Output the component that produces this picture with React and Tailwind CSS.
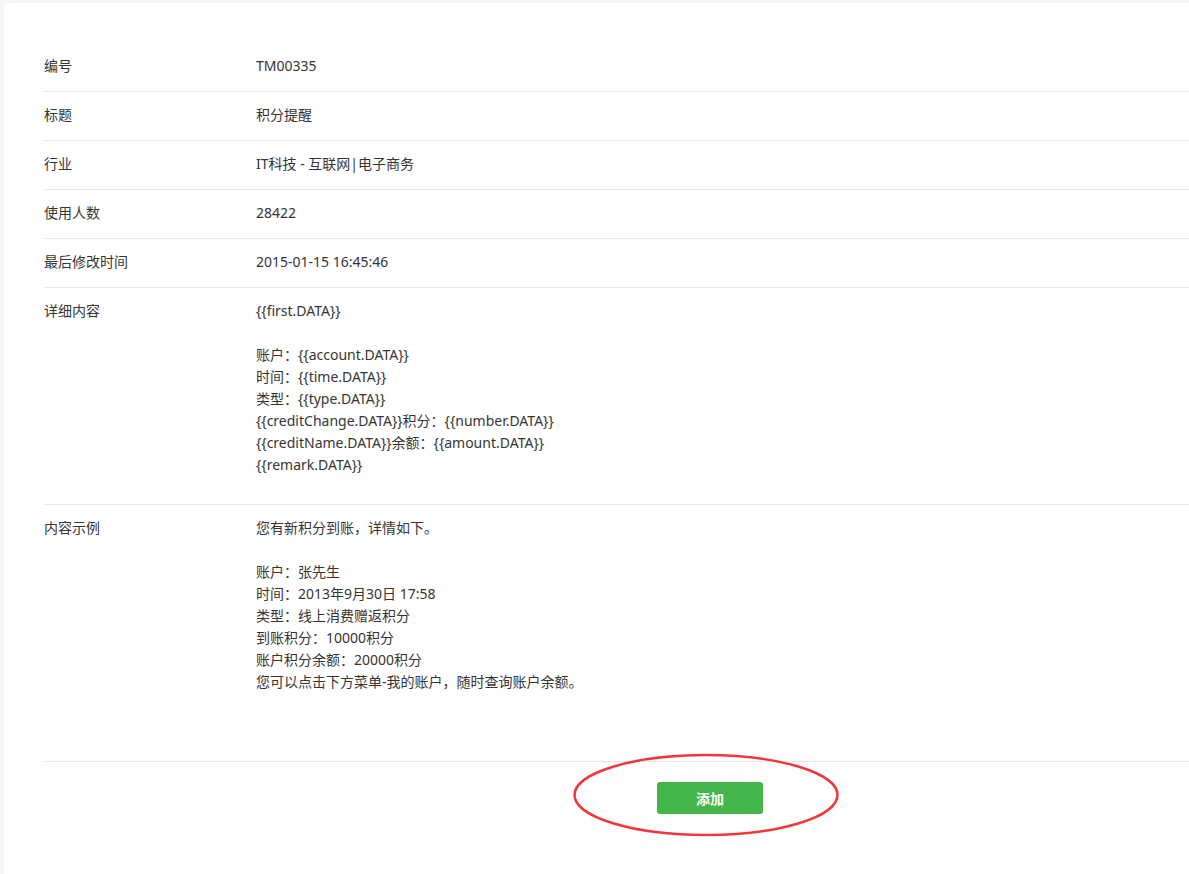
import React from "react";

const font = { fontFamily: '"Noto Sans", "Noto Sans CJK SC", sans-serif' };

function Row({ label, children, pb = "pb-[14px]" }) {
  return (
    <div className={`flex border-b border-[#e7e7eb] pt-[12px] ${pb} text-[14px] leading-[22px] text-[#353535]`}>
      <div className="w-[212px] shrink-0">{label}</div>
      <div className="flex-1">{children}</div>
    </div>
  );
}

export default function App() {
  return (
    <div className="min-h-[874px] bg-[#f4f5f9] pt-[3px] pl-[4px] overflow-hidden" style={font}>
      <div className="relative min-h-[871px] w-[1400px] rounded-tl-[4px] bg-white pl-[40px] pt-[40px]">
        <Row label="编号">TM00335</Row>
        <Row label="标题">积分提醒</Row>
        <Row label="行业">IT科技 - 互联网|电子商务</Row>
        <Row label="使用人数">28422</Row>
        <Row label="最后修改时间">2015-01-15 16:45:46</Row>
        <Row label="详细内容" pb="pb-[28px]">
          <div>{"{{first.DATA}}"}</div>
          <div className="h-[22px]" />
          <div>账户：{"{{account.DATA}}"}</div>
          <div>时间：{"{{time.DATA}}"}</div>
          <div>类型：{"{{type.DATA}}"}</div>
          <div>{"{{creditChange.DATA}}"}积分：{"{{number.DATA}}"}</div>
          <div>{"{{creditName.DATA}}"}余额：{"{{amount.DATA}}"}</div>
          <div>{"{{remark.DATA}}"}</div>
        </Row>
        <Row label="内容示例" pb="pb-[68px]">
          <div>您有新积分到账，详情如下。</div>
          <div className="h-[22px]" />
          <div>账户：张先生</div>
          <div>时间：2013年9月30日 17:58</div>
          <div>类型：线上消费赠返积分</div>
          <div>到账积分：10000积分</div>
          <div>账户积分余额：20000积分</div>
          <div>您可以点击下方菜单-我的账户，随时查询账户余额。</div>
        </Row>
        <div className="pt-[20px] pl-[613px]">
          <button className="flex h-[32px] w-[106px] items-center justify-center rounded-[3px] bg-[#44b549] text-[14px] font-semibold text-white">
            添加
          </button>
        </div>
        <svg
          className="absolute left-[567px] top-[749px] pointer-events-none"
          width="272"
          height="87"
          viewBox="0 0 272 87"
        >
          <ellipse cx="135" cy="43" rx="131.5" ry="40" fill="none" stroke="#f2373b" strokeWidth="2.5" />
        </svg>
      </div>
    </div>
  );
}
